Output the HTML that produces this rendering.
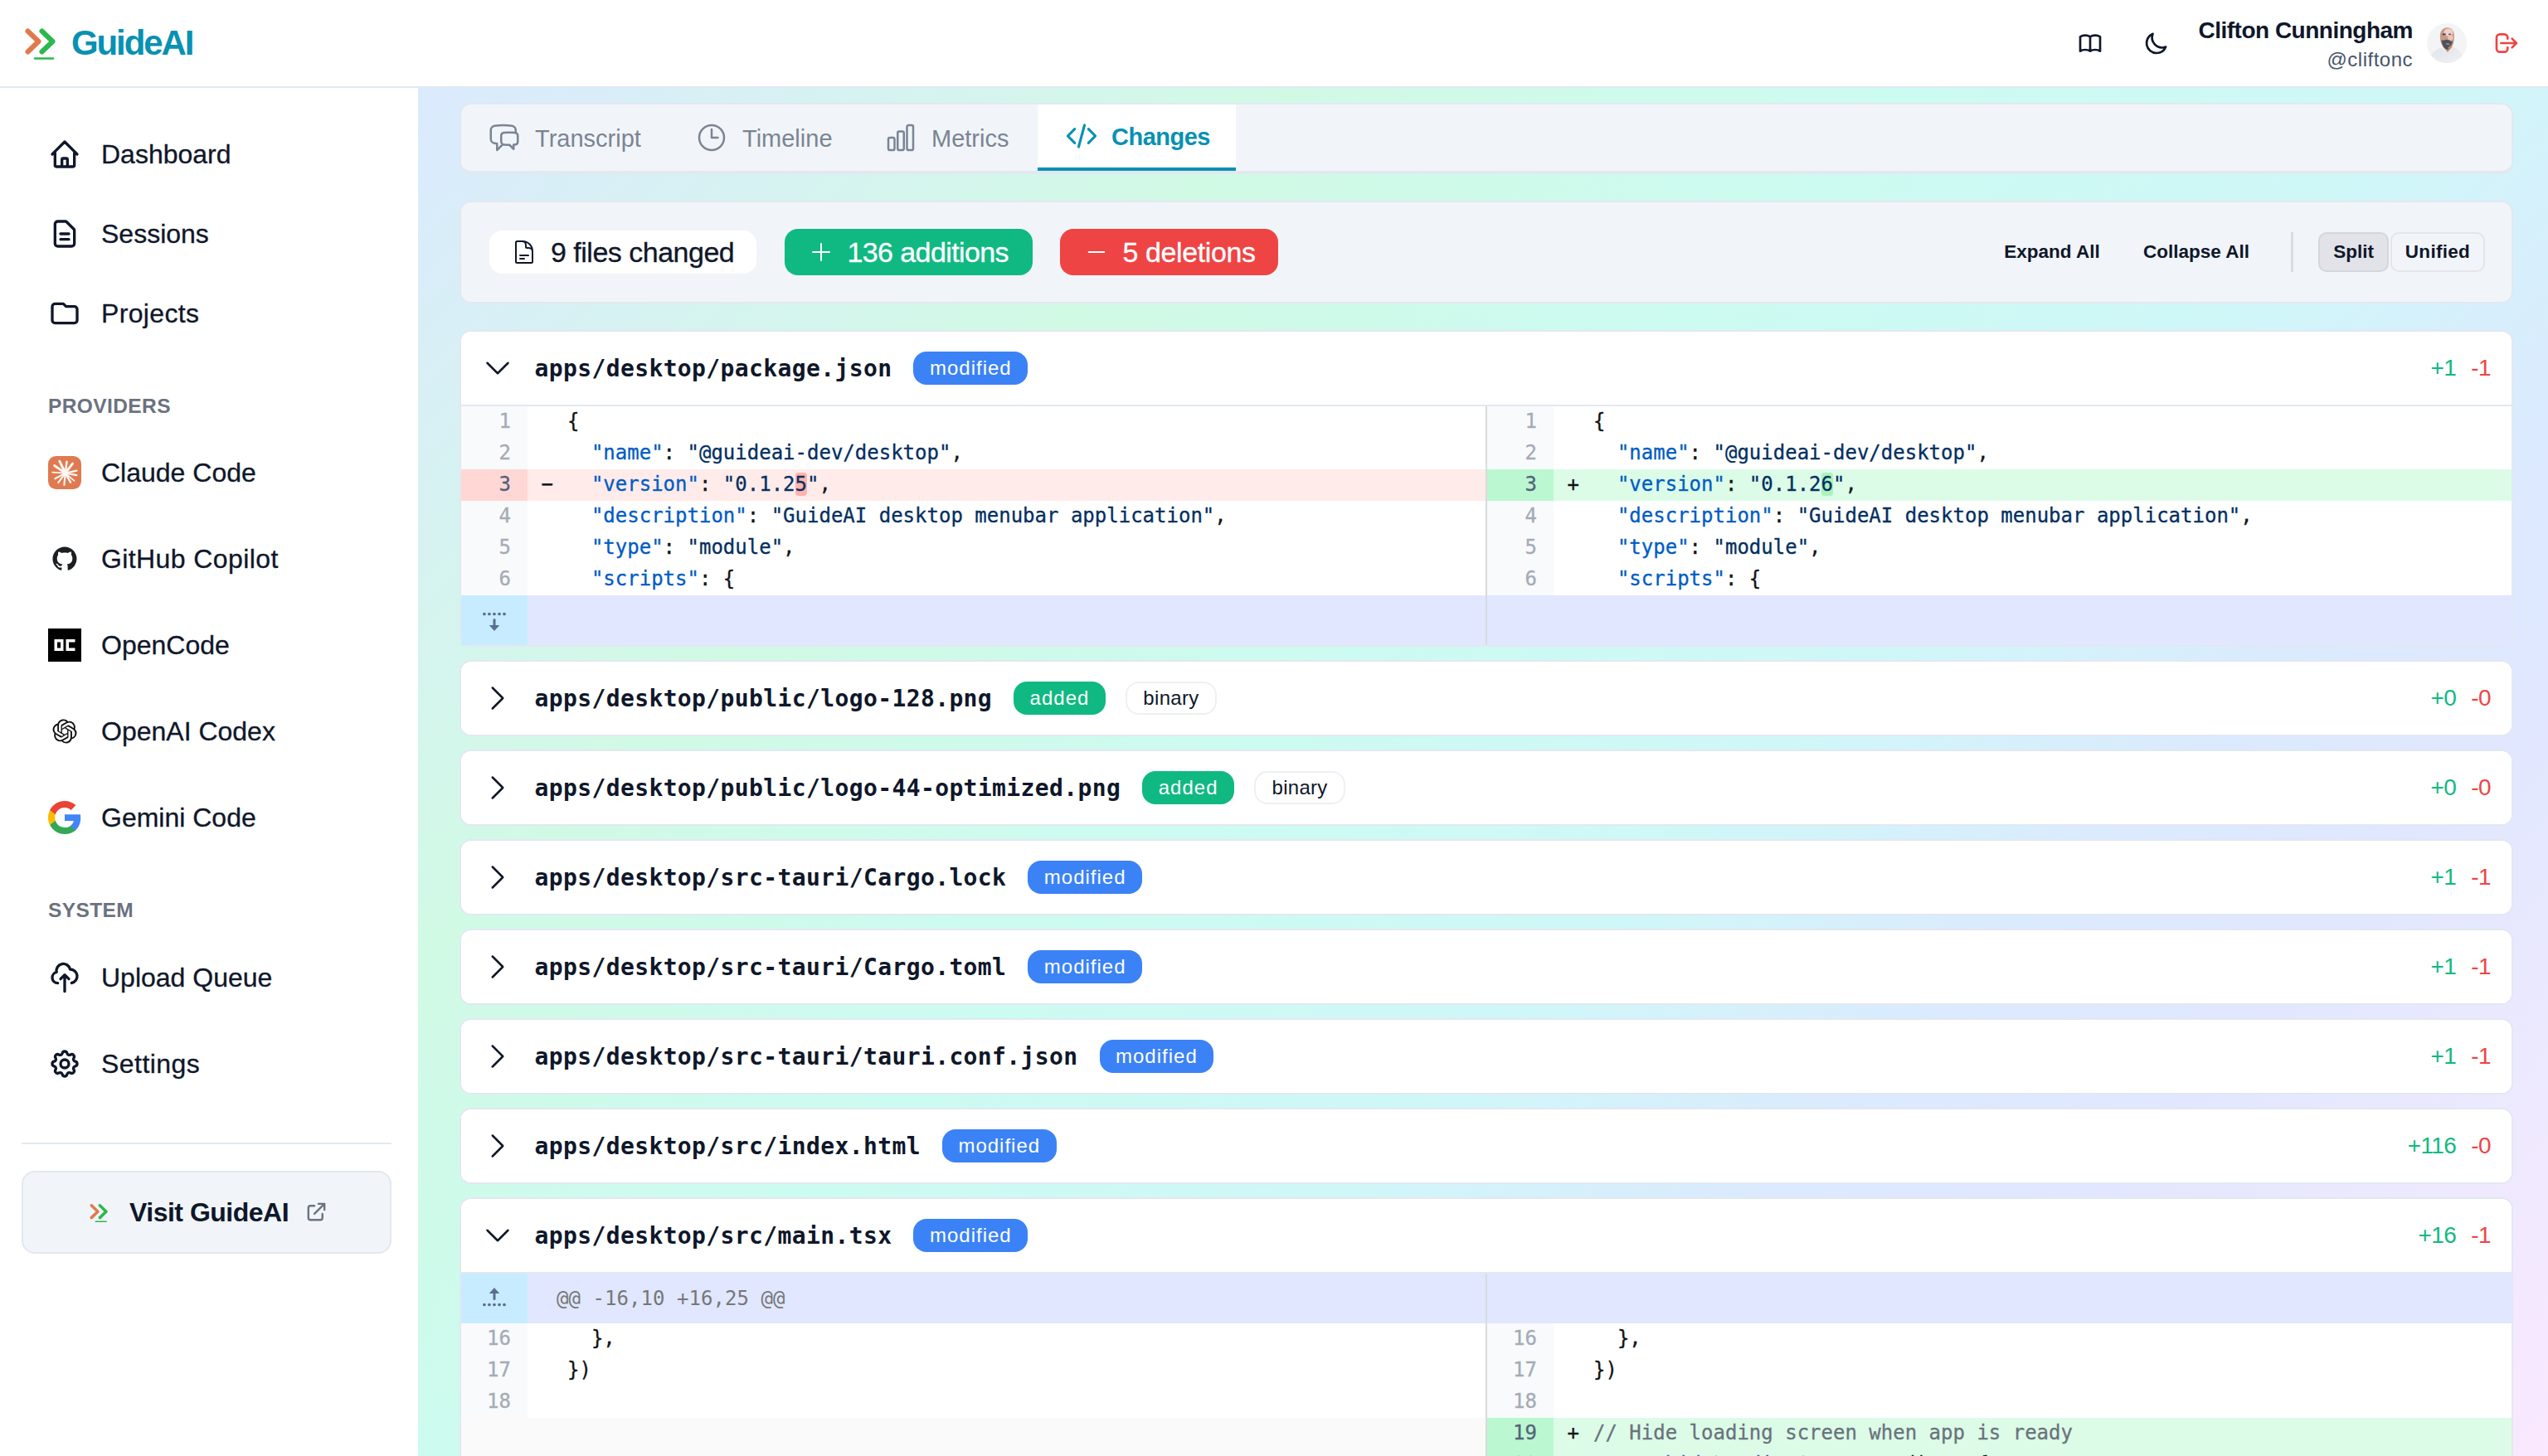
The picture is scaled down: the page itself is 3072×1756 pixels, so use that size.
<!DOCTYPE html>
<html lang="en">
<head>
<meta charset="utf-8">
<title>GuideAI - Changes</title>
<style>
*{box-sizing:border-box;margin:0;padding:0}
html,body{width:3072px;height:1756px;overflow:hidden;background:#fff}
body{font-family:"Liberation Sans",Arial,sans-serif;color:#0f172a;position:relative}
.mono{font-family:"DejaVu Sans Mono","Liberation Mono",monospace}
svg{display:block}
.abs{position:absolute}
/* header */
#header{position:absolute;left:0;top:0;width:3072px;height:106px;background:#fff;border-bottom:2px solid #e2e8f0;z-index:5}
#brand{position:absolute;left:86px;top:26px;font-size:42px;line-height:52px;font-weight:700;color:#0891b2;letter-spacing:-2.1px;white-space:nowrap}
#uname{position:absolute;right:163px;top:19px;font-size:28px;line-height:36px;font-weight:700;letter-spacing:-0.5px;white-space:nowrap;color:#0f172a}
#uhandle{position:absolute;right:163px;top:56px;font-size:24px;line-height:32px;letter-spacing:0.5px;white-space:nowrap;color:#475569}
/* sidebar */
#sidebar{position:absolute;left:0;top:106px;width:504px;height:1650px;background:#fff}
.nav{position:absolute;left:58px;height:48px;display:flex;align-items:center;font-size:32px;white-space:nowrap;color:#0f172a;-webkit-text-stroke:0.3px}
.nav svg{width:40px;height:40px;margin-right:24px;flex:none}
.sect{position:absolute;left:58px;font-size:24.5px;line-height:30px;font-weight:700;letter-spacing:0.4px;color:#6b7280}
#visit{position:absolute;left:26px;top:1412px;width:446px;height:100px;border:2px solid #e2e8f0;background:#f1f5f9;border-radius:16px}
/* main */
#main{position:absolute;left:504px;top:106px;width:2568px;height:1650px;
background:linear-gradient(135deg,#dbeafe 0%,#d1fae5 25%,#ccfbf1 43%,#cff7f8 58%,#dbeafe 70%,#e0e7ff 78%,#ede9fe 89%,#fae8ff 100%)}
.card{position:absolute;left:554px;width:2476px;border:2px solid #e2e8f0;border-radius:14px;overflow:hidden}
</style>
</head>
<body>
<div id="main"></div>

<div id="header">
  <svg class="abs" style="left:28px;top:30px" width="44" height="46" viewBox="0 0 44 46" fill="none" stroke-linecap="round" stroke-linejoin="round">
    <path d="M5.5 7.5 L18.5 20 L5.5 32.5" stroke="#e07a4d" stroke-width="6"/>
    <path d="M22.5 7.5 L35.5 20 L22.5 32.5" stroke="#2bb84c" stroke-width="6"/>
    <path d="M14 40.5 H36" stroke="#2bb84c" stroke-width="2.6"/>
  </svg>
  <div id="brand">GuideAI</div>
  <svg class="abs" style="left:2504px;top:36px" width="32" height="32" viewBox="0 0 24 24" fill="none" stroke="#0f172a" stroke-width="2" stroke-linecap="round" stroke-linejoin="round"><path d="M12 6.253v13m0-13C10.832 5.477 9.246 5 7.5 5S4.168 5.477 3 6.253v13C4.168 18.477 5.754 18 7.5 18s3.332.477 4.500 1.253m0-13C13.168 5.477 14.754 5 16.5 5c1.747 0 3.332.477 4.5 1.253v13C19.832 18.477 18.247 18 16.5 18c-1.746 0-3.332.477-4.5 1.253"/></svg>
  <svg class="abs" style="left:2584px;top:36px" width="32" height="32" viewBox="0 0 24 24" fill="none" stroke="#0f172a" stroke-width="2" stroke-linecap="round" stroke-linejoin="round"><path d="M20.354 15.354A9 9 0 018.646 3.646 9.003 9.003 0 0012 21a9.003 9.003 0 008.354-5.646z"/></svg>
  <div id="uname">Clifton Cunningham</div>
  <div id="uhandle">@cliftonc</div>
  <svg class="abs" style="left:2926px;top:28px" width="48" height="48" viewBox="0 0 48 48">
    <defs><clipPath id="av"><circle cx="24" cy="24" r="24"/></clipPath>
    <linearGradient id="sh" x1="0" y1="0" x2="1" y2="1"><stop offset="0" stop-color="#dfe2e8"/><stop offset="1" stop-color="#f1f2f5"/></linearGradient></defs>
    <g clip-path="url(#av)">
      <rect width="48" height="48" fill="#f3f4f6"/>
      <path d="M2 48 C3 38 8 33 17 29.500 L24 34 L31.500 28.500 C38 31 44 36 46 48 Z" fill="url(#sh)"/>
      <path d="M21 30 L25 35 L29.500 29 L28 26 L20 26 Z" fill="#b98b6f"/>
      <path d="M15.800 16 C15.800 8.500 20 5.300 24.700 5.300 C29.500 5.300 33.200 9 33 16.500 C32.800 24 30 32.500 25 32.500 C20 32.500 15.800 24 15.800 16 Z" fill="#c79c84"/>
      <ellipse cx="26" cy="11" rx="5.500" ry="4.600" fill="#f4cfc6"/>
      <ellipse cx="28.500" cy="17.500" rx="3.300" ry="3" fill="#efc4b8"/>
      <ellipse cx="20.700" cy="13.400" rx="2.300" ry="1.100" fill="#4b4a55"/>
      <ellipse cx="27.600" cy="13.300" rx="1.600" ry="0.900" fill="#4b4a55"/>
      <path d="M17.500 20 C19 21.500 21 20.500 23 19.800 C25 19.300 27 20.300 28.500 21.500 C29.500 22.500 30.500 22 31 21 C30.500 26 28.500 30.500 26 31.500 C24 32.300 21.500 31 19.800 28 C18.500 25.500 17.700 23 17.500 20 Z" fill="#4a5060"/>
      <path d="M22.500 24.600 C24.500 24 26.500 24.200 28 25 C27 26.400 24 26.600 22.500 24.600 Z" fill="#b98b6f"/>
      <path d="M25.500 29 C27.500 28 29.500 26 30.500 24 C30.500 28 28.500 31.500 26 32.200 Z" fill="#b58769"/>
    </g>
  </svg>
  <svg class="abs" style="left:3006px;top:36px" width="32" height="32" viewBox="0 0 24 24" fill="none" stroke="#ef4444" stroke-width="2" stroke-linecap="round" stroke-linejoin="round"><path d="M17 16l4-4m0 0l-4-4m4 4H7m6 4v1a3 3 0 01-3 3H6a3 3 0 01-3-3V7a3 3 0 013-3h4a3 3 0 013 3v1"/></svg>
</div>

<div id="sidebar">
  <div class="nav" style="top:56px"><svg viewBox="0 0 24 24" fill="none" stroke="#0f172a" stroke-width="2" stroke-linecap="round" stroke-linejoin="round"><path d="M3 12l2-2m0 0l7-7 7 7M5 10v10a1 1 0 001 1h3m10-11l2 2m-2-2v10a1 1 0 01-1 1h-3m-6 0a1 1 0 001-1v-4a1 1 0 011-1h2a1 1 0 011 1v4a1 1 0 001 1m-6 0h6"/></svg>Dashboard</div>
  <div class="nav" style="top:152px"><svg viewBox="0 0 24 24" fill="none" stroke="#0f172a" stroke-width="2" stroke-linecap="round" stroke-linejoin="round"><path d="M9 12h6m-6 4h6m2 5H7a2 2 0 01-2-2V5a2 2 0 012-2h5.586a1 1 0 01.707.293l5.414 5.414a1 1 0 01.293.707V19a2 2 0 01-2 2z"/></svg>Sessions</div>
  <div class="nav" style="top:248px"><svg viewBox="0 0 24 24" fill="none" stroke="#0f172a" stroke-width="2" stroke-linecap="round" stroke-linejoin="round"><path d="M3 7v10a2 2 0 002 2h14a2 2 0 002-2V9a2 2 0 00-2-2h-6l-2-2H5a2 2 0 00-2 2z"/></svg><span style="letter-spacing:0.35px">Projects</span></div>

  <div class="sect" style="top:369px">PROVIDERS</div>

  <div class="nav" style="top:440px"><svg viewBox="0 0 40 40"><rect width="40" height="40" rx="9.500" fill="#df7a50"/><g stroke="#fdf6f3" stroke-linecap="round"><path d="M20.8 20.6L13.8 6.2" stroke-width="3.0"/><path d="M20.8 20.6L22.5 6.6" stroke-width="2.4"/><path d="M20.8 20.6L29.5 9.1" stroke-width="3.0"/><path d="M20.8 20.6L34.4 17.7" stroke-width="2.4"/><path d="M20.8 20.6L34.4 23.1" stroke-width="2.2"/><path d="M20.8 20.6L31.5 29.9" stroke-width="1.6"/><path d="M20.8 20.6L27 31.7" stroke-width="2.4"/><path d="M20.8 20.6L19.4 34.8" stroke-width="2.2"/><path d="M20.8 20.6L12.2 32.1" stroke-width="2.0"/><path d="M20.8 20.6L8.4 27.2" stroke-width="2.2"/><path d="M20.8 20.6L5.2 19.6" stroke-width="1.8"/><path d="M20.8 20.6L7.6 11.5" stroke-width="2.8"/></g><circle cx="20.8" cy="20.6" r="3.6" fill="#fdf6f3"/></svg>Claude Code</div>
  <div class="nav" style="top:544px"><svg viewBox="-3 -3 22 22"><path fill="#1b1f23" d="M8 0C3.58 0 0 3.58 0 8c0 3.54 2.29 6.53 5.47 7.59.4.07.55-.17.55-.38 0-.19-.01-.82-.01-1.49-2.01.37-2.53-.49-2.69-.94-.09-.23-.48-.94-.82-1.13-.28-.15-.68-.52-.01-.53.63-.01 1.08.58 1.23.82.72 1.21 1.87.87 2.33.66.07-.52.28-.87.51-1.07-1.78-.2-3.64-.89-3.64-3.95 0-.87.31-1.59.82-2.15-.08-.2-.36-1.02.08-2.12 0 0 .67-.21 2.2.82.64-.18 1.32-.27 2-.27.68 0 1.36.09 2 .27 1.53-1.04 2.2-.82 2.2-.82.44 1.1.16 1.92.08 2.12.51.56.82 1.27.82 2.15 0 3.07-1.87 3.75-3.65 3.95.29.25.54.73.54 1.48 0 1.07-.01 1.93-.01 2.2 0 .21.15.46.55.38A8.013 8.013 0 0016 8c0-4.42-3.58-8-8-8z"/></svg><span style="letter-spacing:0.4px">GitHub Copilot</span></div>
  <div class="nav" style="top:648px"><svg viewBox="0 0 40 40"><rect width="40" height="40" fill="#000"/><path fill="#fff" fill-rule="evenodd" d="M7.5 13h11v14h-11zM11 16.5v7h4v-7z"/><path fill="#fff" d="M21.500 13h11v3.500h-7.500v7h7.500V27h-11z"/></svg>OpenCode</div>
  <div class="nav" style="top:752px"><svg viewBox="-4.500 -4.500 33 33"><path fill="#111" d="M22.2819 9.8211a5.9847 5.9847 0 0 0-.5157-4.9108 6.0462 6.0462 0 0 0-6.5098-2.9A6.0651 6.0651 0 0 0 4.9807 4.1818a5.9847 5.9847 0 0 0-3.9977 2.9 6.0462 6.0462 0 0 0 .7427 7.0966 5.98 5.98 0 0 0 .511 4.9107 6.051 6.051 0 0 0 6.5146 2.9001A5.9847 5.9847 0 0 0 13.2599 24a6.0557 6.0557 0 0 0 5.7718-4.2058 5.9894 5.9894 0 0 0 3.9977-2.9001 6.0557 6.0557 0 0 0-.7475-7.0729zm-9.022 12.6081a4.4755 4.4755 0 0 1-2.8764-1.0408l.1419-.0804 4.7783-2.7582a.7948.7948 0 0 0 .3927-.6813v-6.7369l2.02 1.1686a.071.071 0 0 1 .038.052v5.5826a4.504 4.504 0 0 1-4.4945 4.4944zm-9.6607-4.1254a4.4708 4.4708 0 0 1-.5346-3.0137l.142.0852 4.783 2.7582a.7712.7712 0 0 0 .7806 0l5.8428-3.3685v2.3324a.0804.0804 0 0 1-.0332.0615L9.74 19.9502a4.4992 4.4992 0 0 1-6.1408-1.6464zM2.3408 7.8956a4.485 4.485 0 0 1 2.3655-1.9728V11.6a.7664.7664 0 0 0 .3879.6765l5.8144 3.3543-2.0201 1.1685a.0757.0757 0 0 1-.071 0l-4.8303-2.7865A4.504 4.504 0 0 1 2.3408 7.872zm16.5963 3.8558L13.1038 8.364 15.1192 7.2a.0757.0757 0 0 1 .071 0l4.8303 2.7913a4.4944 4.4944 0 0 1-.6765 8.1042v-5.6772a.79.79 0 0 0-.407-.667zm2.0107-3.0231l-.142-.0852-4.7735-2.7818a.7759.7759 0 0 0-.7854 0L9.409 9.2297V6.8974a.0662.0662 0 0 1 .0284-.0615l4.8303-2.7866a4.4992 4.4992 0 0 1 6.6802 4.66zM8.3065 12.863l-2.02-1.1638a.0804.0804 0 0 1-.038-.0567V6.0742a4.4992 4.4992 0 0 1 7.3757-3.4537l-.142.0805L8.704 5.459a.7948.7948 0 0 0-.3927.6813zm1.0976-2.3654l2.602-1.4998 2.6069 1.4998v2.9994l-2.5974 1.4997-2.6067-1.4997Z"/></svg>OpenAI Codex</div>
  <div class="nav" style="top:856px"><svg viewBox="1 1 22 22"><path fill="#4285F4" d="M22.56 12.25c0-.78-.07-1.53-.2-2.25H12v4.26h5.92c-.26 1.37-1.04 2.53-2.21 3.31v2.77h3.57c2.08-1.92 3.28-4.74 3.28-8.09z"/><path fill="#34A853" d="M12 23c2.97 0 5.46-.98 7.28-2.66l-3.57-2.77c-.98.66-2.23 1.06-3.71 1.06-2.86 0-5.29-1.93-6.16-4.53H2.18v2.84C3.99 20.53 7.7 23 12 23z"/><path fill="#FBBC05" d="M5.84 14.09c-.22-.66-.35-1.36-.35-2.09s.13-1.43.35-2.09V7.07H2.18C1.43 8.55 1 10.22 1 12s.43 3.45 1.18 4.93l2.85-2.22.81-.62z"/><path fill="#EA4335" d="M12 5.38c1.62 0 3.06.56 4.21 1.64l3.15-3.15C17.45 2.09 14.97 1 12 1 7.7 1 3.99 3.47 2.18 7.07l3.66 2.84c.87-2.6 3.3-4.53 6.16-4.53z"/></svg>Gemini Code</div>

  <div class="sect" style="top:977px">SYSTEM</div>

  <div class="nav" style="top:1049px"><svg viewBox="0 0 24 24" fill="none" stroke="#0f172a" stroke-width="2" stroke-linecap="round" stroke-linejoin="round"><path d="M7 16a4 4 0 01-.88-7.903A5 5 0 1115.9 6L16 6a5 5 0 011 9.9M15 13l-3-3m0 0l-3 3m3-3v12"/></svg>Upload Queue</div>
  <div class="nav" style="top:1153px"><svg viewBox="0 0 24 24" fill="none" stroke="#0f172a" stroke-width="2" stroke-linecap="round" stroke-linejoin="round"><path d="M10.325 4.317c.426-1.756 2.924-1.756 3.35 0a1.724 1.724 0 002.573 1.066c1.543-.94 3.31.826 2.37 2.37a1.724 1.724 0 001.065 2.572c1.756.426 1.756 2.924 0 3.35a1.724 1.724 0 00-1.066 2.573c.94 1.543-.826 3.31-2.37 2.37a1.724 1.724 0 00-2.572 1.065c-.426 1.756-2.924 1.756-3.35 0a1.724 1.724 0 00-2.573-1.066c-1.543.94-3.31-.826-2.37-2.37a1.724 1.724 0 00-1.065-2.572c-1.756-.426-1.756-2.924 0-3.35a1.724 1.724 0 001.066-2.573c-.94-1.543.826-3.31 2.37-2.37.996.608 2.296.07 2.572-1.065z"/><path d="M15 12a3 3 0 11-6 0 3 3 0 016 0z"/></svg><span style="letter-spacing:0.45px">Settings</span></div>

  <div class="abs" style="left:26px;top:1272px;width:446px;height:2px;background:#e2e8f0"></div>
  <div id="visit" style="top:1306px">
    <svg class="abs" style="left:79px;top:35px" width="26" height="28" viewBox="0 0 44 46" fill="none" stroke-linecap="round" stroke-linejoin="round"><path d="M5.5 7.5 L18.5 20 L5.5 32.5" stroke="#e07a4d" stroke-width="6"/><path d="M22.5 7.5 L35.5 20 L22.5 32.5" stroke="#2bb84c" stroke-width="6"/><path d="M14 40.5 H36" stroke="#2bb84c" stroke-width="2.6"/></svg>
    <div class="abs" style="left:128px;top:28px;font-size:32px;line-height:40px;font-weight:700;letter-spacing:-0.5px;white-space:nowrap">Visit GuideAI</div>
    <svg class="abs" style="left:339px;top:33px" width="29" height="29" viewBox="0 0 24 24" fill="none" stroke="#6b7280" stroke-width="2" stroke-linecap="round" stroke-linejoin="round"><path d="M10 6H6a2 2 0 00-2 2v10a2 2 0 002 2h10a2 2 0 002-2v-4M14 4h6m0 0v6m0-6L10 14"/></svg>
  </div>
</div>

<style>
#tabs{top:124px;height:86px;background:#f1f5f9;border-bottom-width:4px}
.tab{position:absolute;top:0;height:80px;padding-top:3px;display:flex;align-items:center;font-size:29px;color:#7b8494;white-space:nowrap;padding-left:32px}
.tab svg{width:40px;height:40px;margin-right:17px;flex:none;position:relative;top:-2px}
.tab.on svg{top:-2px;width:38px;height:38px;margin-left:1.5px;margin-right:17.5px}
.tab.on{background:#fff;color:#0891b2;font-weight:700;border-bottom:4px solid #0891b2;height:80px;letter-spacing:-0.5px;padding-top:3px}
#summary{top:242px;height:124px;background:#f1f5f9}
.pill{position:absolute;display:flex;align-items:center;white-space:nowrap;font-size:34px;border-radius:16px;-webkit-text-stroke:0.3px}
.btn.bb{line-height:44px}
.btn{position:absolute;top:36px;height:48px;line-height:48px;font-size:22.5px;font-weight:700;white-space:nowrap;text-align:center;color:#0f172a}
</style>
<div class="card" id="tabs">
  <div class="tab" style="left:0;width:250px"><svg viewBox="0 0 24 24" fill="none" stroke="#7b8494" stroke-width="1.5" stroke-linecap="round" stroke-linejoin="round"><path d="M20.25 8.511c.884.284 1.5 1.128 1.5 2.097v4.286c0 1.136-.847 2.1-1.98 2.193-.34.027-.68.052-1.02.072v3.091l-3-3c-1.354 0-2.694-.055-4.02-.163a2.115 2.115 0 0 1-.825-.242m9.345-8.334a2.126 2.126 0 0 0-.476-.095 48.640 48.640 0 0 0-8.048 0c-1.131.094-1.976 1.057-1.976 2.192v4.286c0 .837.46 1.580 1.155 1.951m9.345-8.334V6.637c0-1.621-1.152-3.026-2.760-3.235A48.455 48.455 0 0 0 11.250 3c-2.115 0-4.198.137-6.240.402-1.608.209-2.760 1.614-2.760 3.235v6.226c0 1.621 1.152 3.026 2.760 3.235.577.075 1.157.140 1.740.194V21l4.155-4.155"/></svg>Transcript</div>
  <div class="tab" style="left:250px;width:228px"><svg viewBox="0 0 24 24" fill="none" stroke="#7b8494" stroke-width="1.5" stroke-linecap="round" stroke-linejoin="round"><path d="M12 6v6h4.500m4.500 0a9 9 0 1 1-18 0 9 9 0 0 1 18 0Z"/></svg>Timeline</div>
  <div class="tab" style="left:478px;width:217px"><svg viewBox="0 0 24 24" fill="none" stroke="#7b8494" stroke-width="1.5" stroke-linecap="round" stroke-linejoin="round"><path d="M3 13.125C3 12.504 3.504 12 4.125 12h2.250c.621 0 1.125.504 1.125 1.125v6.750C7.500 20.496 6.996 21 6.375 21h-2.250A1.125 1.125 0 0 1 3 19.875v-6.750ZM9.750 8.625c0-.621.504-1.125 1.125-1.125h2.250c.621 0 1.125.504 1.125 1.125v11.250c0 .621-.504 1.125-1.125 1.125h-2.250a1.125 1.125 0 0 1-1.125-1.125V8.625ZM16.500 4.125c0-.621.504-1.125 1.125-1.125h2.250C20.496 3 21 3.504 21 4.125v15.750c0 .621-.504 1.125-1.125 1.125h-2.250a1.125 1.125 0 0 1-1.125-1.125V4.125Z"/></svg>Metrics</div>
  <div class="tab on" style="left:695px;width:239px"><svg viewBox="0 0 24 24" fill="none" stroke="#0891b2" stroke-width="2" stroke-linecap="round" stroke-linejoin="round"><path d="M17.250 6.750 22.500 12l-5.250 5.250m-10.500 0L1.500 12l5.250-5.250m7.500-3-4.500 16.500"/></svg>Changes</div>
</div>

<div class="card" id="summary">
  <div class="pill" style="left:34px;top:34px;width:322px;height:52px;background:#fff;color:#0f172a">
    <svg class="abs" style="left:26px;top:10px" width="32" height="32" viewBox="0 0 24 24" fill="none" stroke="#0f172a" stroke-width="1.5" stroke-linecap="round" stroke-linejoin="round"><path d="M19.500 14.250v-2.625a3.375 3.375 0 0 0-3.375-3.375h-1.500A1.125 1.125 0 0 1 13.500 7.125v-1.500a3.375 3.375 0 0 0-3.375-3.375H8.250m0 12.750h7.500m-7.500 3H12M10.500 2.250H5.625c-.621 0-1.125.504-1.125 1.125v17.250c0 .621.504 1.125 1.125 1.125h12.750c.621 0 1.125-.504 1.125-1.125V11.250a9 9 0 0 0-9-9Z"/></svg>
    <span class="abs" style="left:74px;top:6px;line-height:40px;letter-spacing:-0.5px">9 files changed</span>
  </div>
  <div class="pill" style="left:390px;top:32px;width:299px;height:56px;background:#10b981;color:#fff">
    <svg class="abs" style="left:28px;top:12px" width="32" height="32" viewBox="0 0 24 24" fill="none" stroke="#fff" stroke-width="1.5" stroke-linecap="round"><path d="M12 4.500v15m7.500-7.500h-15"/></svg>
    <span class="abs" style="left:75.5px;top:8px;line-height:40px;letter-spacing:-0.6px">136 additions</span>
  </div>
  <div class="pill" style="left:721.5px;top:32px;width:263px;height:56px;background:#ef4444;color:#fff">
    <svg class="abs" style="left:28px;top:12px" width="32" height="32" viewBox="0 0 24 24" fill="none" stroke="#fff" stroke-width="1.5" stroke-linecap="round"><path d="M5 12h14"/></svg>
    <span class="abs" style="left:76px;top:8px;line-height:40px;letter-spacing:-0.4px">5 deletions</span>
  </div>
  <div class="btn" style="left:1860px;width:116px">Expand All</div>
  <div class="btn" style="left:2027px;width:130px">Collapse All</div>
  <div class="abs" style="left:2205.5px;top:36px;width:3px;height:48px;background:#d8dce3"></div>
  <div class="btn bb" style="left:2239px;width:85px;background:#e1e3e8;border:2px solid #d3d6dc;border-radius:10px">Split</div>
  <div class="btn bb" style="left:2326px;width:114px;border:2px solid #e2e5ea;border-radius:10px;letter-spacing:0.3px">Unified</div>
</div>

<!--C2S--><style>
.fc{background:#fff}
.fc.open{overflow:visible}
.fc.open .fh{border-radius:12px 12px 0 0}
.fh{position:relative;height:90px;border-bottom:2px solid #e2e8f0;display:flex;align-items:center;background:#fff}
.fc[style*="height:92px"] .fh{border-bottom:0;height:88px}
.chev{width:40px;height:40px;margin-left:24px;flex:none}
.fn{margin-left:24.5px;font-size:28px;font-weight:700;letter-spacing:0.38px;color:#0f172a;white-space:pre}
.bdg{margin-left:26px;height:40px;line-height:40px;border-radius:16px;font-size:24px;letter-spacing:1px;padding:0 19.5px;color:#fff;white-space:nowrap}
.bdg.modified{background:#3b82f6}
.bdg.added{background:#10b981}
.bdg.binary{background:#fff;color:#0f172a;border:2px solid #edf0f4;line-height:36px;margin-left:24px;letter-spacing:0.3px}
.st{position:absolute;right:25px;top:0;height:100%;display:flex;align-items:center;font-size:28px;letter-spacing:-0.6px;white-space:nowrap}
.ga{color:#10b981}.rd{color:#ef4444;margin-left:18px}
.split{position:relative;display:flex;width:100%}
.pane{width:1235px;flex:none;position:relative}
.pane.rt{width:1237px;border-left:2px solid #d9dadd;margin-left:0}
.r{height:38px;display:flex;font-family:"DejaVu Sans Mono","Liberation Mono",monospace;font-size:24px;line-height:36px;white-space:pre;background:#fff}
.ln{width:80px;flex:none;text-align:right;padding-right:20px;-webkit-text-stroke:0.3px;background:#f8fafc;color:#a4abb6}
.cd{flex:1;position:relative;padding-left:48px;color:#111418;-webkit-text-stroke:0.3px}
.op{position:absolute;left:16.5px;top:0;color:#111}
.r.del .ln{background:#ffd7d5;color:#55637a}.r.del .cd{background:#ffebe9}
.r.add .ln{background:#bbf7d0;color:#55637a}.r.add .cd{background:#dcfce7}
.r.emp{background:#fafafa}
.k{color:#005cc5}.s{color:#032f62}.c{color:#6a737d}.kw{color:#d73a49}.fnn{color:#6f42c1}
.hd{background:#ffb3ad;border-radius:4px}.ha{background:#abf2bc;border-radius:4px}
.hk{height:60px;display:flex;background:#e0e7ff}
.hg{width:80px;flex:none;background:#c7ecff;display:flex;align-items:center;justify-content:center}
.hx{width:32px;height:32px}
.ht{padding-left:35px;font-size:24px;line-height:60px;color:#777;white-space:pre;letter-spacing:0.05px}
</style>
<div class="card fc open" style="top:398px;height:382px"><div class="fh"><svg class="chev" viewBox="0 0 24 24" fill="none" stroke="#0f172a" stroke-width="1.5" stroke-linecap="round" stroke-linejoin="round"><path d="m19.500 8.250-7.500 7.500-7.500-7.500"/></svg><span class="fn mono">apps/desktop/package.json</span><span class="bdg modified">modified</span><span class="st"><span class="ga">+1</span><span class="rd">-1</span></span></div><div class="split"><div class="pane l"><div class="r"><span class="ln">1</span><span class="cd">{</span></div><div class="r"><span class="ln">2</span><span class="cd">  <span class="k">&quot;name&quot;</span>: <span class="s">&quot;@guideai-dev/desktop&quot;</span>,</span></div><div class="r del"><span class="ln">3</span><span class="cd"><span class="op">−</span>  <span class="k">&quot;version&quot;</span>: <span class="s">&quot;0.1.2<span class="hd">5</span>&quot;</span>,</span></div><div class="r"><span class="ln">4</span><span class="cd">  <span class="k">&quot;description&quot;</span>: <span class="s">&quot;GuideAI desktop menubar application&quot;</span>,</span></div><div class="r"><span class="ln">5</span><span class="cd">  <span class="k">&quot;type&quot;</span>: <span class="s">&quot;module&quot;</span>,</span></div><div class="r"><span class="ln">6</span><span class="cd">  <span class="k">&quot;scripts&quot;</span>: {</span></div><div class="hk"><span class="hg"><svg class="hx" viewBox="0 0 32 32" fill="#5b6e91"><circle cx="3.900" cy="8.500" r="1.850"/><circle cx="9.900" cy="8.500" r="1.850"/><circle cx="15.950" cy="8.500" r="1.850"/><circle cx="22" cy="8.500" r="1.850"/><circle cx="28" cy="8.500" r="1.850"/><path d="M16 15.500V23" stroke="#5b6e91" stroke-width="3" stroke-linecap="round" fill="none"/><path d="M9.800 22H22.200L16 29Z"/></svg></span><span class="ht mono"></span></div></div><div class="pane rt"><div class="r"><span class="ln">1</span><span class="cd">{</span></div><div class="r"><span class="ln">2</span><span class="cd">  <span class="k">&quot;name&quot;</span>: <span class="s">&quot;@guideai-dev/desktop&quot;</span>,</span></div><div class="r add"><span class="ln">3</span><span class="cd"><span class="op">+</span>  <span class="k">&quot;version&quot;</span>: <span class="s">&quot;0.1.2<span class="ha">6</span>&quot;</span>,</span></div><div class="r"><span class="ln">4</span><span class="cd">  <span class="k">&quot;description&quot;</span>: <span class="s">&quot;GuideAI desktop menubar application&quot;</span>,</span></div><div class="r"><span class="ln">5</span><span class="cd">  <span class="k">&quot;type&quot;</span>: <span class="s">&quot;module&quot;</span>,</span></div><div class="r"><span class="ln">6</span><span class="cd">  <span class="k">&quot;scripts&quot;</span>: {</span></div><div class="hk"><span class="ht"></span></div></div></div></div>
<div class="card fc" style="top:796px;height:92px"><div class="fh"><svg class="chev" viewBox="0 0 24 24" fill="none" stroke="#0f172a" stroke-width="1.5" stroke-linecap="round" stroke-linejoin="round"><path d="m8.250 4.500 7.500 7.500-7.500 7.500"/></svg><span class="fn mono">apps/desktop/public/logo-128.png</span><span class="bdg added">added</span><span class="bdg binary">binary</span><span class="st"><span class="ga">+0</span><span class="rd">-0</span></span></div></div>
<div class="card fc" style="top:904px;height:92px"><div class="fh"><svg class="chev" viewBox="0 0 24 24" fill="none" stroke="#0f172a" stroke-width="1.5" stroke-linecap="round" stroke-linejoin="round"><path d="m8.250 4.500 7.500 7.500-7.500 7.500"/></svg><span class="fn mono">apps/desktop/public/logo-44-optimized.png</span><span class="bdg added">added</span><span class="bdg binary">binary</span><span class="st"><span class="ga">+0</span><span class="rd">-0</span></span></div></div>
<div class="card fc" style="top:1012px;height:92px"><div class="fh"><svg class="chev" viewBox="0 0 24 24" fill="none" stroke="#0f172a" stroke-width="1.5" stroke-linecap="round" stroke-linejoin="round"><path d="m8.250 4.500 7.500 7.500-7.500 7.500"/></svg><span class="fn mono">apps/desktop/src-tauri/Cargo.lock</span><span class="bdg modified">modified</span><span class="st"><span class="ga">+1</span><span class="rd">-1</span></span></div></div>
<div class="card fc" style="top:1120px;height:92px"><div class="fh"><svg class="chev" viewBox="0 0 24 24" fill="none" stroke="#0f172a" stroke-width="1.5" stroke-linecap="round" stroke-linejoin="round"><path d="m8.250 4.500 7.500 7.500-7.500 7.500"/></svg><span class="fn mono">apps/desktop/src-tauri/Cargo.toml</span><span class="bdg modified">modified</span><span class="st"><span class="ga">+1</span><span class="rd">-1</span></span></div></div>
<div class="card fc" style="top:1228px;height:92px"><div class="fh"><svg class="chev" viewBox="0 0 24 24" fill="none" stroke="#0f172a" stroke-width="1.5" stroke-linecap="round" stroke-linejoin="round"><path d="m8.250 4.500 7.500 7.500-7.500 7.500"/></svg><span class="fn mono">apps/desktop/src-tauri/tauri.conf.json</span><span class="bdg modified">modified</span><span class="st"><span class="ga">+1</span><span class="rd">-1</span></span></div></div>
<div class="card fc" style="top:1336px;height:92px"><div class="fh"><svg class="chev" viewBox="0 0 24 24" fill="none" stroke="#0f172a" stroke-width="1.5" stroke-linecap="round" stroke-linejoin="round"><path d="m8.250 4.500 7.500 7.500-7.500 7.500"/></svg><span class="fn mono">apps/desktop/src/index.html</span><span class="bdg modified">modified</span><span class="st"><span class="ga">+116</span><span class="rd">-0</span></span></div></div>
<div class="card fc open" style="top:1444px;height:400px"><div class="fh"><svg class="chev" viewBox="0 0 24 24" fill="none" stroke="#0f172a" stroke-width="1.5" stroke-linecap="round" stroke-linejoin="round"><path d="m19.500 8.250-7.500 7.500-7.500-7.500"/></svg><span class="fn mono">apps/desktop/src/main.tsx</span><span class="bdg modified">modified</span><span class="st"><span class="ga">+16</span><span class="rd">-1</span></span></div><div class="split"><div class="pane l"><div class="hk"><span class="hg"><svg class="hx" viewBox="0 0 32 32" fill="#5b6e91"><circle cx="3.900" cy="23.500" r="1.850"/><circle cx="9.900" cy="23.500" r="1.850"/><circle cx="15.950" cy="23.500" r="1.850"/><circle cx="22" cy="23.500" r="1.850"/><circle cx="28" cy="23.500" r="1.850"/><path d="M16 16.500V9" stroke="#5b6e91" stroke-width="3" stroke-linecap="round" fill="none"/><path d="M9.800 10H22.200L16 3Z"/></svg></span><span class="ht mono">@@ -16,10 +16,25 @@</span></div><div class="r"><span class="ln">16</span><span class="cd">  },</span></div><div class="r"><span class="ln">17</span><span class="cd">})</span></div><div class="r"><span class="ln">18</span><span class="cd"></span></div><div class="r emp"></div><div class="r emp"></div></div><div class="pane rt"><div class="hk"><span class="ht"></span></div><div class="r"><span class="ln">16</span><span class="cd">  },</span></div><div class="r"><span class="ln">17</span><span class="cd">})</span></div><div class="r"><span class="ln">18</span><span class="cd"></span></div><div class="r add"><span class="ln">19</span><span class="cd"><span class="op">+</span><span class="c">// Hide loading screen when app is ready</span></span></div><div class="r add"><span class="ln">20</span><span class="cd"><span class="op">+</span><span class="kw">const</span> <span class="fnn">hideLoadingScreen</span> = () =&gt; {</span></div></div></div></div>
<!--C2E-->
</body>
</html>
